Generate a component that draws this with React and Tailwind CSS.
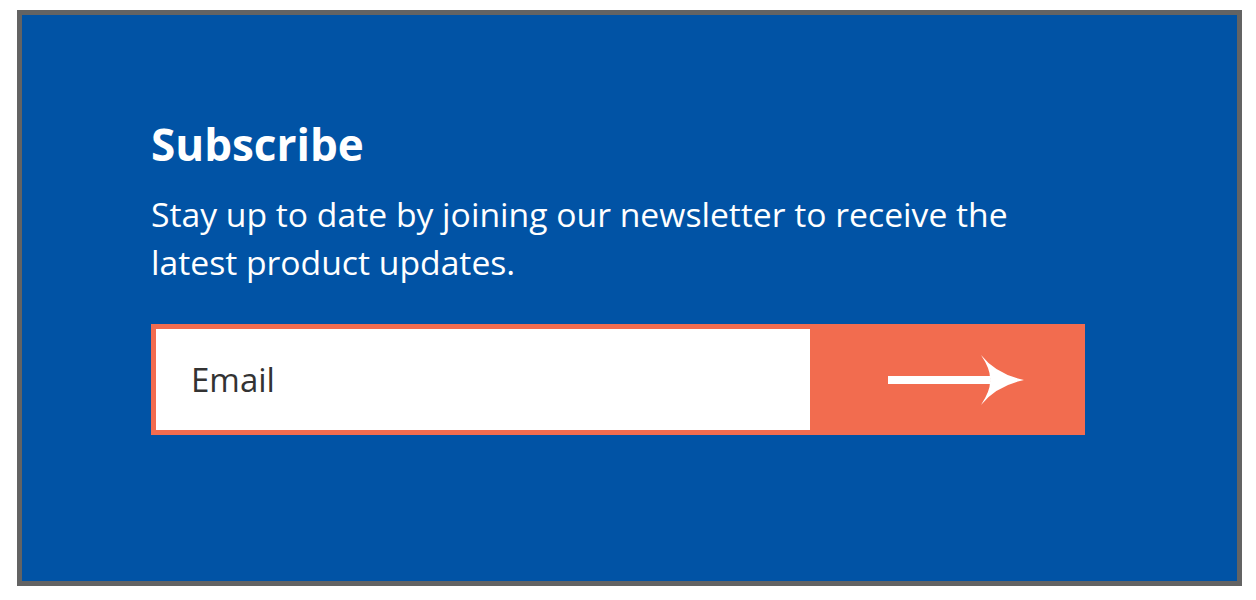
import React from "react";

// Newsletter subscribe panel
export default function App() {
  return (
    <div className="min-h-[600px] bg-white pl-[17px] pt-[10px]" style={{ fontFamily: '"Open Sans", "Noto Sans", sans-serif' }}>
      <div className="w-[1225px] h-[576px] border-[5px] border-[#636363] bg-[#0153a5] pl-[129px] pt-[107px]">
        <h1 className="text-[44px] leading-[44px] font-bold text-white">Subscribe</h1>
        <p className="mt-[24px] w-[880px] text-[33.7px] leading-[48px] text-white">
          Stay up to date by joining our newsletter to receive the latest product updates.
        </p>
        <form className="mt-[38px] flex w-[934px] h-[111px]" onSubmit={(e) => e.preventDefault()}>
          <input
            type="email"
            placeholder="Email"
            className="w-[664px] h-full border-[5px] border-[#f26c4f] bg-white pl-[35px] text-[33px] text-[#333] placeholder:text-[#333] outline-none"
          />
          <button type="submit" className="flex-1 h-full bg-[#f26c4f] flex items-center pl-[73px]">
            <ArrowIcon />
          </button>
        </form>
      </div>
    </div>
  );
}

const ArrowIcon = () => (
  <svg width="136" height="52" viewBox="0 0 136 52" fill="white">
    <rect x="0" y="22" width="102" height="8" />
    <path d="M93 1 Q108 20 136 26 Q108 32 93 51 Q103 36 102 26 Q103 16 93 1 Z" />
  </svg>
);
